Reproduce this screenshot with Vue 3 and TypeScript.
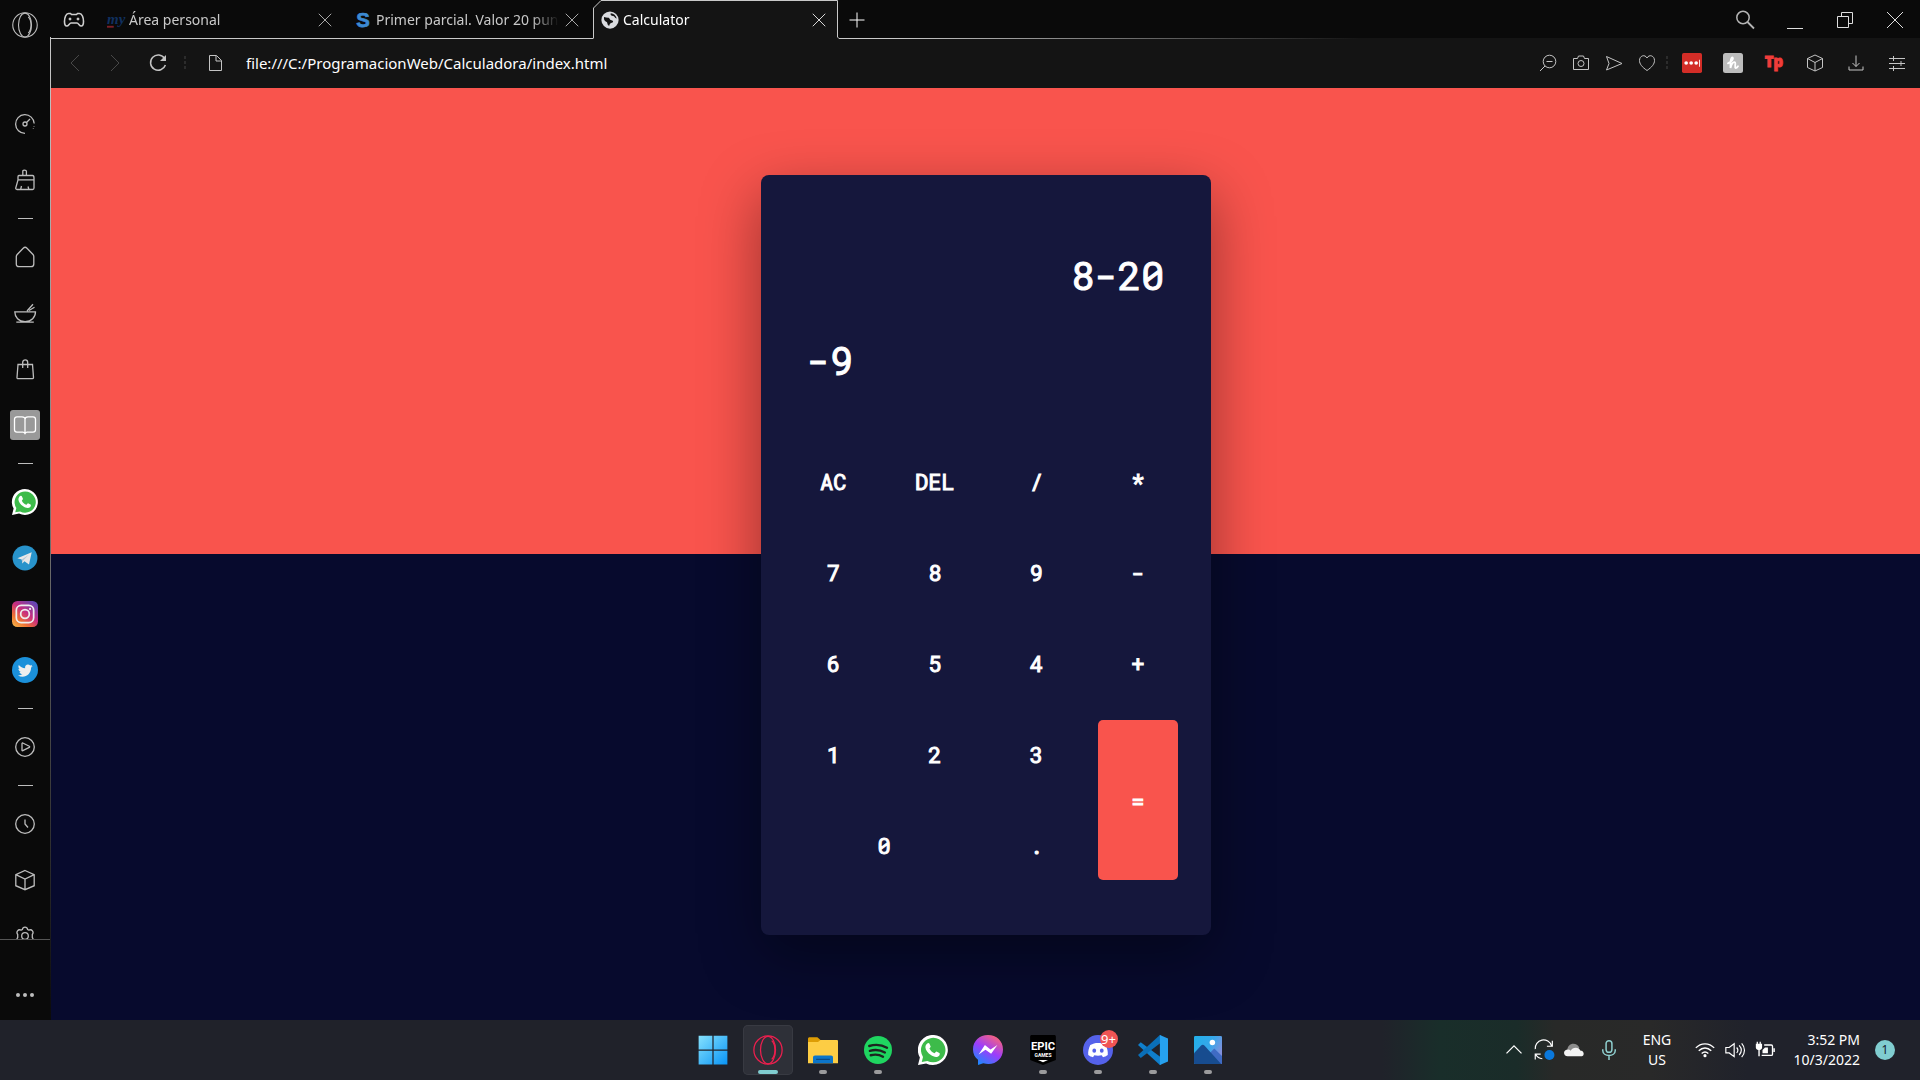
<script setup lang="ts">
import { ref } from 'vue'

const icons: Record<string, string> = {
  opera: '<circle cx="12" cy="12" r="11.3"/><ellipse cx="12" cy="12" rx="6" ry="11"/><path d="M15 4.5c3.4 3.5 3.4 11.5 0 15"/>',
  gamepad: '<path d="M6.500 5.500h2l1 1h5l1-1h2c2.500 0 4 4 4 8 0 3-.8 4.500-2.300 4.500-1.800 0-2.700-3-4.200-3H9c-1.500 0-2.400 3-4.200 3-1.500 0-2.300-1.500-2.300-4.500 0-4 1.500-8 4-8z" stroke-width="1.600"/><circle cx="8" cy="11" r="1" fill="currentColor"/><circle cx="16" cy="11" r="1" fill="currentColor"/>',
  close: '<path d="M4.500 4.500l15 15M19.500 4.500l-15 15"/>',
  plus: '<path d="M12 4.500v15M4.500 12h15"/>',
  back: '<path d="M16 4L8 12l8 8"/>',
  forward: '<path d="M8 4l8 8-8 8"/>',
  reload: '<path d="M18.600 7.600A7.600 7.600 0 1 0 19.400 14" stroke-width="1.500"/><path d="M20 4v6h-6z" fill="currentColor" stroke="none"/>',
  page: '<path d="M6.500 4.500h7l5 5v10h-12zM13 4.500V10h5.500"/>',
  search: '<circle cx="10" cy="9.500" r="6.200" stroke-width="1.500"/><path d="M14.500 14l6.500 6.500" stroke-width="1.800"/>',
  minimize: '<path d="M4 20.500h16"/>',
  restore: '<path d="M4.500 8.500h11v11h-11zM8.500 8V4.500h11v11H16"/>',
  closeWin: '<path d="M4 4l16 16M20 4L4 20"/>',
  zoomOut: '<circle cx="13.500" cy="10.500" r="6.300"/><path d="M9 15l-5 5M10.500 10.500h6"/>',
  camera: '<path d="M4.500 7.500h4l1-2.500h5l1 2.500h4v11h-15z"/><circle cx="12" cy="12.500" r="3"/>',
  send: '<path d="M4.500 5.500l15.500 7-15.500 6.500 2.500-6.500z"/>',
  heart: '<path d="M12 19.500C7 16 4.500 13 4.500 9.500c0-5 5.500-6.500 7.500-2.500 2-4 7.500-2.500 7.500 2.500 0 3.500-2.500 6.500-7.500 10z"/>',
  box: '<path d="M12 4l7.500 3.500v9L12 20l-7.500-3.500v-9zM4.500 7.500l7.500 4 7.500-4M12 11.500V20"/>',
  download: '<path d="M12 4.500v11M8.500 12l3.500 3.500 3.500-3.500M5 15.500v3.500h14v-3.500"/>',
  sliders: '<path d="M4 7.500h16M4 12.500h16M4 17.500h16M8.500 5v5M16 10v5M8.500 15v5"/>',
  speed: '<path d="M12 21.300A9.300 9.300 0 1 1 21.200 11.500M21 14v.6M20.400 16.600v.5"/><circle cx="12" cy="12" r="2"/><path d="M13.500 10.500l3.500-3.500"/>',
  broom: '<path d="M9.800 7.500V3.300c0-1.600 3.600-1.600 3.600 0v4.200M6 7.500h13.500c1.500 0 1.500 1 1.500 2.500v10c0 1-.5 1.500-1.500 1.500H4c-1 0-1.500-.8-1.200-1.800L5 12V8.800c0-.8.300-1.300 1-1.300zM5 11.800h16M8.500 18l-.8 3.200M15 18.500l.8 2.700"/>',
  home: '<path d="M10.200 3.200c1.200-1.200 2.600-1.200 3.800 0l6 6.300c.6.700.8 1.200.8 2V19c0 1.800-.9 2.700-2.700 2.700H6c-1.800 0-2.700-.9-2.700-2.700v-7.500c0-.8.300-1.300.9-2z"/>',
  bowl: '<path d="M1.800 10.800h20.700c0 5.500-4 9.800-10.400 9.800S1.800 16.300 1.800 10.800zM3.300 21.200h17.500M14 10l6-6.800M16 9.500l5.500-3.200"/>',
  bag: '<path d="M5 7.500h14.500l1 13c0 .8-.4 1.200-1.200 1.200H5.100c-.8 0-1.200-.4-1.100-1.200zM9.700 11V5.500c0-3.500 5-3.500 5 0V11"/>',
  book: '<path d="M12 6.500c0-2-1-2.700-3-2.700H4c-1.500 0-2.500 1-2.500 2.500v10.500c0 1.500 1 2.300 2.500 2.300h6c1 0 1.500.8 2 1.500.5-.7 1-1.500 2-1.500h6c1.500 0 2.500-.8 2.500-2.300V6.300c0-1.500-1-2.500-2.500-2.500h-5c-2 0-3 .7-3 2.700zM12 6.500v14"/>',
  play: '<circle cx="12" cy="12" r="9.300"/><path d="M9 8.500c0-.5.400-.6.800-.5l6.500 3.200c.5.300.5.900 0 1.200L9.800 15.700c-.4.200-.8 0-.8-.5z"/>',
  clock: '<circle cx="12" cy="12" r="9.300"/><path d="M12 7.500V12l3 3.500"/>',
  cube: '<path d="M12 2.500l9.200 4.200v11L12 21.700l-9.200-4v-11zM2.800 6.700L12 11l9.200-4.300M12 11v10.700"/>',
  gear: '<path d="M9.300 5.600c.6-3.200 4.800-3.200 5.400 0l1 .5c3.300-1.400 5.500 1.800 3.600 4.400v3c1.900 2.600-.3 5.800-3.600 4.400l-1 .5c-.6 3.200-4.800 3.200-5.400 0l-1-.5C5 19.300 2.800 16.100 4.700 13.500v-3C2.800 7.900 5 4.700 8.300 6.100z"/><circle cx="12" cy="12" r="3.300"/>',
  more: '<g fill="currentColor" stroke="none"><circle cx="5" cy="12" r="2"/><circle cx="12" cy="12" r="2"/><circle cx="19" cy="12" r="2"/></g>',
  whatsapp: '<path d="M0 24l1.500-6A12 12 0 1 1 6.500 22.700z" fill="#fff" stroke="none"/><path d="M3 21.500l1-4A9.800 9.800 0 1 1 7.500 20.700z" fill="#3dbb4a" stroke="none"/><path d="M8.300 6.300c.5 0 .7.200.9.700l.9 2.100c.2.500-.8 1.300-1 1.700.9 1.900 2.400 3.100 4.200 3.800.4-.3 1.100-1.500 1.500-1.400l2.300 1.200c.6.300.3 1.500-.2 2.100-1.700 1.800-4.600.9-6.600-.5-2.300-1.600-4.300-4-4.400-6.300 0-1.500 1.100-3.400 2.400-3.400z" fill="#fff" stroke="none"/>',
  telegram: '<circle cx="12" cy="12" r="11.500" fill="#2893cb" stroke="none"/><path d="M5 12.200l13.200-5.400-2.500 11.300-4.200-3.100-2 2-.5-3.600z" fill="#e8e8e8" stroke="none"/><path d="M9 13.400l6.500-4.500-5 5.200-.8 2.700z" fill="#b6c9d6" stroke="none"/>',
  instagram: '<defs><linearGradient id="ig" x1="0" y1="1" x2="0.800" y2="0"><stop offset="0" stop-color="#f6c04c"/><stop offset=".3" stop-color="#ef7133"/><stop offset=".6" stop-color="#c72d80"/><stop offset="1" stop-color="#6247b5"/></linearGradient></defs><rect width="24" height="24" rx="5" fill="url(#ig)" stroke="none"/><rect x="4" y="4" width="16" height="16" rx="4.500" stroke="#eee" stroke-width="1.600"/><circle cx="12" cy="12" r="4" stroke="#eee" stroke-width="1.600"/><circle cx="16.700" cy="7.300" r="1" fill="#eee" stroke="none"/>',
  twitter: '<circle cx="12" cy="12" r="12" fill="#1b90da" stroke="none"/><path d="M19 8.200c-.5.300-1 .4-1.600.5.600-.4 1-.9 1.200-1.500-.6.300-1.200.6-1.800.7-2-2-5.300-.4-4.700 2.500-2.300-.1-4.400-1.200-5.800-3-.8 1.400-.3 3 .9 3.900-.5 0-.9-.2-1.300-.4 0 1.400 1 2.600 2.300 2.900-.4.100-.9.100-1.300 0 .4 1.200 1.400 2 2.700 2-1.100.9-2.700 1.400-4.200 1.200 5.500 3.300 12.300-.2 12.200-7.200.6-.4 1-.9 1.400-1.600z" fill="#eee" stroke="none"/>',
  globe: '<circle cx="12" cy="12" r="11.500" fill="#dadce0" stroke="none"/><path d="M4 8c2 .5 3.500 1 5.500 1 2.500 0 1.500 3 4.500 3.200 2.500.3 3 2.800.5 3.500-2 .5-3 1.500-3.500 4-3-1-2-4-3.500-5C5 13.500 3.500 12 4 8zM13 3c-1 2.500 1 3.500 3 3.500s2 2.500 5 3.500c-1-4-4-7-8-7z" fill="#141414" stroke="none"/>',
  moodle: '<text x="0" y="17" font-family="Liberation Serif, serif" font-style="italic" font-weight="700" font-size="20" fill="#10305f" stroke="none">my</text><path d="M0 21h9" stroke="#7b1f27" stroke-width="2.500"/>',
  letterS: '<text x="12" y="21.500" text-anchor="middle" font-family="Liberation Sans, sans-serif" font-weight="700" font-size="27" fill="#3c8ad2" stroke="#3c8ad2">S</text>',
  lastpass: '<rect width="24" height="24" rx="2" fill="#d32d27" stroke="none"/><g fill="#fff" stroke="none"><circle cx="5" cy="12" r="2.200"/><circle cx="11" cy="12" r="2.200"/><circle cx="17" cy="12" r="2.200"/><path d="M20.500 8h1v8.500h-1z"/></g>',
  honey: '<rect width="24" height="24" rx="3" fill="#bdbdbd" stroke="none"/><path d="M6 12.500c4-2 7-5.500 5.500-7-1.500-1-3 3-2.500 12.500 1-5 3-7.500 5-7s-.5 6.500 1 7c1 .2 2-.7 3-2.200" stroke="#fff" stroke-width="2.200" stroke-linecap="round"/>',
  tp: '<text x="12" y="17" text-anchor="middle" font-family="Open Sans, sans-serif" font-weight="800" font-size="18" fill="#f03c3a" stroke="#f03c3a">Tp</text>',
  windows: '<defs><linearGradient id="wn" x1="0" y1="0" x2="1" y2="1"><stop offset="0" stop-color="#86e2fd"/><stop offset="1" stop-color="#0994f5"/></linearGradient></defs><path d="M.5.500h11v11H.5zM12.500.500h11v11h-11zM.5 12.500h11v11H.5zM12.500 12.500h11v11h-11z" fill="url(#wn)" stroke="none"/>',
  explorer: '<path d="M0 3c0-.8.500-1.300 1.300-1.300h6.200L10 4h5v8H0z" fill="#dd9d05" stroke="none"/><path d="M0 5.500h8L10 4h13c.6 0 1 .4 1 1v17.500H0z" fill="#fdcd44" stroke="none"/><path d="M4 22.500V18c0-1 .6-1.600 1.600-1.600h12.800c1 0 1.600.6 1.600 1.600v4.500z" fill="#0c75c9" stroke="none"/><path d="M6.500 19.500h11" stroke="#0a4a87"/>',
  spotify: '<circle cx="12" cy="12" r="11.200" fill="#1fd560" stroke="none"/><path d="M5 8.800c5-1.500 10-1 14.200 1.400M5.500 12.700c4.200-1.200 8.300-.8 12 1.300M6.200 16.200c3.500-.9 6.800-.6 9.800 1.200" stroke="#1d2420" stroke-width="1.900" stroke-linecap="round"/>',
  messenger: '<defs><linearGradient id="ms" x1="0.200" y1="1" x2="0.800" y2="0"><stop offset="0" stop-color="#168cff"/><stop offset=".5" stop-color="#9d3cfb"/><stop offset="1" stop-color="#ff6672"/></linearGradient></defs><path d="M12 0C5.200 0 0 4.800 0 11.500c0 3.500 1.500 6.300 4 8.300V24l4.200-1.500C17 25 24 19.400 24 11.500 24 4.800 18.800 0 12 0z" fill="url(#ms)" stroke="none"/><path d="M4.500 15.500l5-7.500 4.500 3.500 5.500-3.500-5 7-4.500-3.300z" fill="#fff" stroke="none"/>',
  epic: '<path d="M1.700 1.500C1.700.500 2.200 0 3.200 0h17.600c1 0 1.500.5 1.500 1.500V20L12 24 1.700 20z" fill="#000" stroke="none"/><g fill="#fff" stroke="none" text-anchor="middle" font-family="Liberation Sans Narrow, Roboto, sans-serif" font-weight="700"><text x="12" y="12" font-size="9">EPIC</text><text x="12" y="17.500" font-size="4">GAMES</text></g><path d="M8 20h8l-4 1.800z" fill="#fff" stroke="none"/>',
  discord: '<circle cx="12" cy="12" r="12" fill="#5562ea" stroke="none"/><path d="M8.800 6.700c2-.5 4.400-.5 6.400 0l3 1.300c1.200 2.500 1.900 5.300 1.600 8-1.300 1-2.500 1.500-3.800 1.700l-1-1.500c-2 .5-4 .5-6 0l-1 1.500c-1.300-.2-2.500-.7-3.800-1.700-.3-2.700.4-5.500 1.600-8z" fill="#fff" stroke="none"/><ellipse cx="9" cy="12.500" rx="1.500" ry="1.700" fill="#5562ea" stroke="none"/><ellipse cx="15" cy="12.500" rx="1.500" ry="1.700" fill="#5562ea" stroke="none"/>',
  vscode: '<path d="M0 8l2.200-2.300L18.500 18v5.500L17.500 24z" fill="#0f7fcc" stroke="none"/><path d="M0 16l2.200 2.300L18.500 6V.3L17.500 0z" fill="#0a6fb8" stroke="none"/><path d="M17.500 0L24 2.800v18.400L17.500 24z" fill="#26a1ee" stroke="none"/>',
  photos: '<defs><linearGradient id="ph" x1="0" y1="0" x2="1" y2="0.500"><stop offset="0" stop-color="#21b0ea"/><stop offset=".6" stop-color="#36a7ea"/><stop offset="1" stop-color="#8290dc"/></linearGradient></defs><rect x=".8" y=".8" width="22.400" height="22.400" rx="1" fill="url(#ph)" stroke="none"/><path d="M11 17l6-6.300 6.200 6v5.500c0 .6-.4 1-1 1H12z" fill="#3f6bc4" stroke="none"/><path d="M.8 14.500l5.500-6c1-.9 2-.9 3 0L22.500 23.200H1.800c-.6 0-1-.4-1-1z" fill="#174c8f" stroke="none"/><circle cx="15.500" cy="6" r="2.200" fill="#fff" stroke="none"/>',
  chevron: '<path d="M3 16l9-9 9 9" stroke-width="1.500"/>',
  sync: '<path d="M1.500 11A10 10 0 0 1 21 7M22 1v6.500h-6.500M8 17H1.500v6.500M2 17.500a10 10 0 0 0 8 5" stroke-width="1.400"/><circle cx="18.500" cy="18" r="6" fill="#0a78dc" stroke="none"/>',
  cloud: '<path d="M4 13C3 4 15 1 18.500 9.500L13 15z" fill="#8d8d8d" stroke="none"/><path d="M8 13c2-5 10-5 11.500-.5 4 0 5 4 3.500 6-.5.500-1 1-2.500 1H4.500c-6 0-6-8 .5-8 1.200 0 2 .5 3 1.500z" fill="#f3f3f3" stroke="none"/>',
  mic: '<rect x="8.500" y="0.800" width="7" height="14" rx="3.500" stroke-width="1.800"/><path d="M4.500 11v1.500c0 8 15 8 15 0V11M12 18.500V24" stroke-width="1.800"/>',
  wifi: '<path d="M1 9.500c6-6.500 16-6.500 22 0M4.500 13c4.500-4.500 10.500-4.500 15 0M8 16.300c2.500-2.300 5.500-2.300 8 0" stroke-width="1.600"/><circle cx="12" cy="18.800" r="1.900" fill="currentColor" stroke="none"/>',
  sound: '<path d="M1 9v6.500h4l6 4.500V4.500L5 9zM14 9c1.800 2 1.800 4.500 0 6.500M17 6.500c3.200 3.500 3.200 8 0 11.500M20 4c4.500 5 4.500 11.500 0 16.500" stroke-width="1.400"/>',
  battery: '<path d="M11 6h8.500c1 0 1.500.5 1.500 1.500v9.500c0 1-.5 1.500-1.500 1.500H8" stroke-width="1.600"/><path d="M12 9h3.500v7H9v-4zM1 4.500h1V2h1.500v2.500h2V2H7v2.500h1.500V9C8.500 11 7 12 5.700 12v7.500H4V12C2.500 12 1 11 1 9zM22 10h1.800v4.500H22z" fill="currentColor" stroke="none"/>',
}

interface Tab { icon: string; title: string; active?: boolean }
const tabs: Tab[] = [
  { icon: 'moodle', title: 'Área personal' },
  { icon: 'letterS', title: 'Primer parcial. Valor 20 pun' },
  { icon: 'globe', title: 'Calculator', active: true },
]

const windowButtons = [
  { icon: 'search', label: 'Search tabs' },
  { icon: 'minimize', label: 'Minimize' },
  { icon: 'restore', label: 'Restore' },
  { icon: 'closeWin', label: 'Close' },
]

const sideItems = [
  'speed', 'broom', '-', 'home', 'bowl', 'bag', 'book', '-',
  'whatsapp', 'telegram', 'instagram', 'twitter', '-',
  'play', '-', 'clock', 'cube', 'gear',
]
const brandIcons = ['whatsapp', 'telegram', 'instagram', 'twitter']

const pageActions = ['zoomOut', 'camera', 'send', 'heart']
const extensions = ['lastpass', 'honey', 'tp', 'box', 'download', 'sliders']

const taskApps = [
  { icon: 'windows', label: 'Start' },
  { icon: 'opera', label: 'Opera GX', active: true },
  { icon: 'explorer', label: 'File Explorer', open: true },
  { icon: 'spotify', label: 'Spotify', open: true },
  { icon: 'whatsapp', label: 'WhatsApp' },
  { icon: 'messenger', label: 'Messenger' },
  { icon: 'epic', label: 'Epic Games', open: true },
  { icon: 'discord', label: 'Discord', open: true, badge: '9+' },
  { icon: 'vscode', label: 'Visual Studio Code', open: true },
  { icon: 'photos', label: 'Photos', open: true },
]

const keys = ['AC', 'DEL', '/', '*', '7', '8', '9', '-', '6', '5', '4', '+', '1', '2', '3', '=', '0', '.']

const address = ref('file:///C:/ProgramacionWeb/Calculadora/index.html')
const expression = ref('8-20')
const result = ref('-9')

function press(key: string) {
  if (key === 'AC') {
    expression.value = ''
    result.value = ''
  } else if (key === 'DEL') {
    expression.value = expression.value.slice(0, -1)
  } else if (key !== '=') {
    expression.value += key
  }
}
</script>

<template>
  <div class="desktop">
    <div class="browser">
      <aside class="sidebar">
        <button class="opera-menu" aria-label="Menu"><svg class="icon brand" viewBox="0 0 24 24" v-html="icons.opera" /></button>
        <nav class="side-list" aria-label="Sidebar">
          <template v-for="(item, i) in sideItems" :key="i">
            <hr v-if="item === '-'" class="side-rule">
            <button v-else class="side-item" :class="{ selected: item === 'book' }" :aria-label="item">
              <svg class="icon" :class="{ brand: brandIcons.includes(item) }" viewBox="0 0 24 24" v-html="icons[item]" />
            </button>
          </template>
        </nav>
        <div class="side-footer">
          <button class="side-item" aria-label="More"><svg class="icon" viewBox="0 0 24 24" v-html="icons.more" /></button>
        </div>
      </aside>

      <div class="window">
        <header class="tab-bar">
          <button class="corner" aria-label="GX Corner"><svg class="icon" viewBox="0 0 24 24" v-html="icons.gamepad" /></button>
          <div v-for="tab in tabs" :key="tab.title" class="tab" :class="{ active: tab.active }">
            <svg v-if="tab.active" class="tab-shape" viewBox="0 0 247 39">
              <path d="M0 39V8L8 0.500H244.500V37L246 38.500V39z" fill="#141414" />
              <path d="M0.500 38.500V8L8 0.500H244.500V37L246 38.500" fill="none" stroke="#c9c9c9" />
            </svg>
            <svg class="favicon" viewBox="0 0 24 24" v-html="icons[tab.icon]" />
            <span class="tab-title">{{ tab.title }}</span>
            <button class="tab-close" aria-label="Close tab"><svg class="icon" viewBox="0 0 24 24" v-html="icons.close" /></button>
          </div>
          <button class="new-tab" aria-label="New tab"><svg class="icon" viewBox="0 0 24 24" v-html="icons.plus" /></button>
          <div class="window-buttons">
            <button v-for="b in windowButtons" :key="b.icon" :aria-label="b.label">
              <svg class="icon" viewBox="0 0 24 24" v-html="icons[b.icon]" />
            </button>
          </div>
        </header>

        <div class="toolbar">
          <button class="tool nav dim" aria-label="Back"><svg class="icon" viewBox="0 0 24 24" v-html="icons.back" /></button>
          <button class="tool nav dim" aria-label="Forward"><svg class="icon" viewBox="0 0 24 24" v-html="icons.forward" /></button>
          <button class="tool reload" aria-label="Reload"><svg class="icon" viewBox="0 0 24 24" v-html="icons.reload" /></button>
          <span class="dots" />
          <svg class="icon page-icon" viewBox="0 0 24 24" v-html="icons.page" />
          <input v-model="address" class="address" type="text" aria-label="Address" spellcheck="false">
          <button v-for="a in pageActions" :key="a" class="tool action" :aria-label="a">
            <svg class="icon" viewBox="0 0 24 24" v-html="icons[a]" />
          </button>
          <span class="dots" />
          <button v-for="(e, i) in extensions" :key="e" class="tool extension" :aria-label="e">
            <svg class="icon" :class="{ small: i < 3 }" viewBox="0 0 24 24" v-html="icons[e]" />
          </button>
        </div>

        <main class="page">
          <section class="calculator" aria-label="Calculator">
            <input v-model="expression" class="screen expression" type="text" aria-label="Expression" readonly>
            <input v-model="result" class="screen" type="text" aria-label="Result" readonly>
            <div class="keys">
              <button
                v-for="key in keys" :key="key" class="key"
                :class="{ equal: key === '=', zero: key === '0' }" @click="press(key)"
              >{{ key }}</button>
            </div>
          </section>
        </main>
      </div>
    </div>

    <footer class="taskbar">
      <nav class="apps" aria-label="Taskbar">
        <button v-for="app in taskApps" :key="app.icon" class="app" :class="{ active: app.active, open: app.open }" :aria-label="app.label">
          <svg class="app-icon" viewBox="0 0 24 24" v-html="icons[app.icon]" />
          <span v-if="app.badge" class="app-badge">{{ app.badge }}</span>
        </button>
      </nav>
      <div class="tray">
        <svg class="icon" viewBox="0 0 24 24" v-html="icons.chevron" />
        <svg class="icon" viewBox="0 0 24 24" v-html="icons.sync" />
        <svg class="icon" viewBox="0 0 24 24" v-html="icons.cloud" />
        <svg class="icon mic" viewBox="0 0 24 24" v-html="icons.mic" />
        <div class="language">ENG<br>US</div>
        <svg class="icon" viewBox="0 0 24 24" v-html="icons.wifi" />
        <svg class="icon" viewBox="0 0 24 24" v-html="icons.sound" />
        <svg class="icon" viewBox="0 0 24 24" v-html="icons.battery" />
        <div class="clock">3:52 PM<br>10/3/2022</div>
        <span class="count">1</span>
      </div>
    </footer>
  </div>
</template>

<style>
body {
  margin: 0;
  background: #0a0a0a;
}
</style>

<style scoped>
.desktop {
  display: flex;
  flex-direction: column;
  height: 100vh;
  overflow: hidden;
  font-family: "Segoe UI", "Noto Sans", sans-serif;
  font-size: 15px;
  color: #fff;
}
button {
  display: flex;
  align-items: center;
  justify-content: center;
  flex-shrink: 0;
  padding: 0;
  border: 0;
  background: none;
  color: inherit;
  font: inherit;
}
input {
  padding: 0;
  border: 0;
  outline: 0;
  background: none;
  color: inherit;
  font: inherit;
}
.icon {
  display: block;
  flex-shrink: 0;
  width: 24px;
  height: 24px;
  fill: none;
  stroke: currentColor;
  overflow: visible;
}
.browser {
  display: flex;
  flex: 1;
  min-height: 0;
}
.sidebar {
  display: flex;
  flex-direction: column;
  width: 50px;
  background: #0a0a0a;
  border-right: 1px solid;
  border-image: linear-gradient(transparent 38px, #c9c9c9 38px, #8a8a8a 40%, #555 65%, #0a0a0a) 1;
  color: #bdbdbd;
}
.opera-menu {
  width: 50px;
  height: 50px;
}
.side-list {
  flex: 1;
  min-height: 0;
  margin-top: 46px;
  overflow: hidden;
}
.side-item {
  width: 49px;
  height: 56px;
}
.side-item .icon {
  stroke-width: 1.3;
}
.sidebar .brand {
  width: 26px;
  height: 26px;
}
.selected .icon {
  padding: 3px;
  border-radius: 3px;
  background: #999;
  color: #fff;
}
.side-rule {
  width: 15px;
  height: 1px;
  margin: 10px auto;
  border: 0;
  background: #bdbdbd;
}
.side-footer {
  display: flex;
  align-items: center;
  height: 81px;
  padding-top: 30px;
  box-sizing: border-box;
  border-top: 1px solid #555;
}
.window {
  display: flex;
  flex: 1;
  flex-direction: column;
  min-width: 0;
}
.tab-bar {
  position: relative;
  display: flex;
  align-items: center;
  height: 39px;
  background: linear-gradient(90deg, #c9c9c9 45%, #141414 70%) bottom / 100% 1px no-repeat #0a0a0a;
}
.corner {
  width: 46px;
  height: 38px;
  margin-right: 2px;
  color: #cfcfcf;
}
.tab {
  position: relative;
  display: flex;
  align-items: center;
  gap: 4px;
  box-sizing: border-box;
  width: 247px;
  height: 39px;
  padding: 0 12px 0 8px;
  color: #c9c9c9;
}
.tab.active {
  color: #fff;
}
.tab-shape {
  position: absolute;
  inset: 0;
  width: 247px;
  height: 39px;
}
.favicon {
  position: relative;
  flex-shrink: 0;
  width: 18px;
  height: 18px;
  overflow: visible;
}
.tab-title {
  position: relative;
  flex: 1;
  line-height: 24px;
  white-space: nowrap;
  font-size: 14px;
  mask-image: linear-gradient(90deg, #000 85%, transparent);
}
.tab-close {
  position: relative;
  width: 18px;
  height: 18px;
}
.tab-close .icon {
  width: 20px;
  height: 20px;
}
.new-tab {
  width: 34px;
  height: 38px;
}
.window-buttons {
  display: flex;
  margin-left: auto;
}
.window-buttons button {
  width: 50px;
  height: 38px;
  color: #dedede;
}
.window-buttons button:first-child {
  color: #b5b5b5;
}
.toolbar {
  display: flex;
  align-items: center;
  box-sizing: border-box;
  height: 49px;
  padding: 0 3px 2px 4px;
  background: #141414;
  color: #c4c4c4;
}
.tool {
  height: 40px;
}
.nav {
  width: 40px;
}
.dim {
  color: #484848;
}
.reload {
  width: 46px;
}
.dots {
  width: 2px;
  height: 14px;
  margin: 0 3px;
  background: repeating-linear-gradient(#2c2c2c 0 3px, transparent 3px 5px);
}
.page-icon {
  margin: 0 19px 0 14px;
}
.address {
  flex: 1;
  min-width: 0;
  height: 30px;
  color: #fff;
}
.action {
  width: 33px;
}
.extension {
  width: 41px;
}
.small {
  width: 20px;
  height: 20px;
}
.page {
  display: flex;
  align-items: center;
  justify-content: center;
  flex: 1;
  min-height: 0;
  padding-top: 2px;
  background: linear-gradient(#f9544d 50%, #070a2d 50%);
}
.calculator {
  box-sizing: border-box;
  width: 450px;
  padding: 57px 33px 55px;
  border-radius: 8px;
  background: #15173c;
  box-shadow: 0 20px 60px rgba(0, 0, 0, 0.4);
  font-family: "Roboto Mono", "DejaVu Sans Mono", monospace;
}
.screen {
  display: block;
  box-sizing: border-box;
  width: 100%;
  height: 85px;
  padding: 0 13px;
  font-size: 39px;
  -webkit-text-stroke: 1px #fff;
}
.expression {
  text-align: right;
}
.keys {
  display: grid;
  grid-template-columns: repeat(4, 1fr);
  grid-auto-rows: 69px;
  gap: 22px;
  margin-top: 45px;
}
.key {
  border-radius: 5px;
  font-size: 22px;
  -webkit-text-stroke: 1px #fff;
}
.equal {
  grid-row: span 2;
  background: #f9544d;
}
.zero {
  grid-column: span 2;
}
.taskbar {
  display: grid;
  grid-template-columns: 1fr auto 1fr;
  align-items: center;
  height: 60px;
  background: linear-gradient(90deg, #20222a 72%, #192e2a 75%, #1a2c29 79%, #282928 81%, #292929 86%, #20222b 91%);
}
.apps {
  display: flex;
  grid-column: 2;
  gap: 5px;
}
.app {
  position: relative;
  width: 50px;
  height: 50px;
  border-radius: 5px;
}
.app-icon {
  width: 30px;
  height: 30px;
  fill: none;
  stroke: currentColor;
}
.app.active {
  background: #2e3038;
  box-shadow: inset 0 0 0 1px #383a42;
  color: #ee1f4e;
}
.app.open::after,
.app.active::after {
  content: "";
  position: absolute;
  bottom: 1px;
  width: 8px;
  height: 4px;
  border-radius: 2px;
  background: #9b9b9d;
}
.app.active::after {
  width: 20px;
  background: #80cdd0;
}
.app-badge {
  position: absolute;
  top: 5px;
  right: 5px;
  width: 18px;
  height: 18px;
  border-radius: 50%;
  background: #f05454;
  font-size: 13px;
  line-height: 18px;
}
.tray {
  display: flex;
  align-items: center;
  justify-content: flex-end;
  gap: 10px;
  padding-right: 25px;
  font-size: 14px;
  line-height: 20px;
}
.tray .icon {
  width: 20px;
  height: 20px;
}
.tray .mic {
  margin-left: 5px;
  color: #8fcfcf;
}
.language {
  width: 56px;
  text-align: center;
}
.clock {
  width: 75px;
  text-align: right;
}
.count {
  width: 20px;
  height: 20px;
  margin-left: 5px;
  border-radius: 50%;
  background: #80cdd0;
  color: #15202a;
  font-size: 12px;
  text-align: center;
}
</style>
